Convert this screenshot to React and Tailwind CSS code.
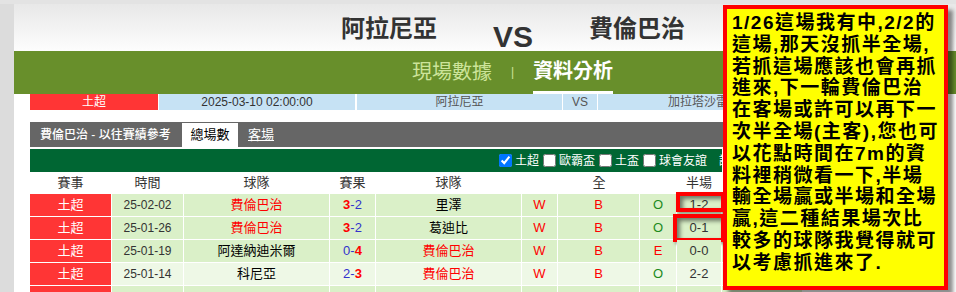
import React from 'react';

const rows = [
  { date: '25-02-02', home: '費倫巴治', away: '里澤', hs: '3', as: '2', homeIsUs: true, w: 'W', b: 'B', o: 'O', half: '1-2', bg: 'bg-[#daf0c8]', mark: 'a' },
  { date: '25-01-26', home: '費倫巴治', away: '葛迪比', hs: '3', as: '2', homeIsUs: true, w: 'W', b: 'B', o: 'O', half: '0-1', bg: 'bg-[#daf0c8]', mark: 'b' },
  { date: '25-01-19', home: '阿達納迪米爾', away: '費倫巴治', hs: '0', as: '4', homeIsUs: false, w: 'W', b: 'B', o: 'E', half: '0-0', bg: 'bg-[#daf0c8]' },
  { date: '25-01-14', home: '科尼亞', away: '費倫巴治', hs: '2', as: '3', homeIsUs: false, w: 'W', b: 'B', o: 'O', half: '2-2', bg: 'bg-[#eef8e6]' },
];

const cols = 'grid grid-cols-[81px_71px_145px_45px_145px_35px_81px_36px_44px_80px] gap-x-[1px]';

const Check = ({ label, checked }) => (
  <label className="flex items-center gap-[3px] mr-[4px] shrink-0">
    <input type="checkbox" defaultChecked={checked} className="w-[13px] h-[13px] m-0" />
    <span className="text-[12px] text-white">{label}</span>
  </label>
);

const App = () => {
  return (
    <div className="w-[956px] h-[292px] overflow-hidden relative bg-white font-['Liberation_Sans','Noto_Sans_CJK_TC',sans-serif]">
      <div className="h-[4px] bg-[#e3e3e3]" />
      <div className="flex h-[288px]">
        <div className="w-[14px] shrink-0 bg-[#dcdcdc]" />
        <div className="flex-1 flex flex-col">
          {/* match title */}
          <div className="h-[47px] bg-linear-to-b from-[#e8e8e8] to-[#fdfdfd] flex items-start pl-[327px] gap-[56px] text-[#333]">
            <span className="mt-[10px] text-[24px] leading-[30px] font-bold">阿拉尼亞</span>
            <span className="mt-[16px] text-[30px] leading-[34px] font-bold">VS</span>
            <span className="mt-[10px] text-[24px] leading-[30px] font-bold">費倫巴治</span>
          </div>

          {/* green nav */}
          <div className="h-[46px] bg-[#688f2b] flex items-end pl-[398px]">
            <div className="h-[43px] flex items-center text-[20px] text-[#cde49a] pb-[2px]">現場數據</div>
            <span className="h-[43px] flex items-center text-[12px] text-[#cde49a] mx-[19px] pb-[2px]">|</span>
            <div className="h-[43px] flex items-center text-[20px] font-bold text-white border-b-[3px] border-white">資料分析</div>
          </div>

          <div className="pl-[16px]">
            {/* match info */}
            <div className="flex h-[16px] text-[12px] leading-[16px] text-[#333]">
              <div className="w-[128px] bg-[#ff3535] text-white text-center">土超</div>
              <div className="w-[196px] ml-[1px] bg-[#c6e2f4] text-center">2025-03-10 02:00:00</div>
              <div className="w-[205px] ml-[2px] bg-[#c6e2f4] text-center text-[#555]">阿拉尼亞</div>
              <div className="w-[34px] ml-[1px] bg-[#c6e2f4] text-center text-[#555]">VS</div>
              <div className="w-[200px] ml-[1px] bg-[#c6e2f4] text-center text-[#555]">加拉塔沙雷</div>
            </div>

            {/* section tabs */}
            <div className="mt-[12px] h-[25px] bg-[#666666] flex items-end text-[12px] w-[790px]">
              <div className="h-[25px] flex items-center pl-[10px] text-white w-[152px] font-medium">費倫巴治 - 以往賽績參考</div>
              <div className="h-[24px] w-[56px] bg-white text-black text-[13px] flex items-center justify-center">總場數</div>
              <div className="h-[25px] flex items-center ml-[10px] text-white text-[13px] underline">客場</div>
            </div>

            {/* filters */}
            <div className="mt-[2px] h-[23px] bg-[#006633] flex items-center pl-[469px] w-[692px] overflow-hidden">
              <Check label="土超" checked />
              <Check label="歐霸盃" />
              <Check label="土盃" />
              <Check label="球會友誼" />
              <span className="ml-[8px] text-[12px] text-white shrink-0">讀</span>
            </div>

            {/* table */}
            <div className="flex flex-col gap-y-[1px]">
              <div className={`${cols} h-[21px] text-[13px] leading-[21px] text-[#333] text-center`}>
                <div>賽事</div>
                <div>時間</div>
                <div>球隊</div>
                <div>賽果</div>
                <div>球隊</div>
                <div className="col-span-3">全</div>
                <div>半場</div>
                <div></div>
              </div>
              {rows.map((r, i) => (
                <div key={i} className={`${cols} h-[22px] text-[12px] leading-[22px] text-center`}>
                  <div className="bg-[#ff3535] text-white text-[13px]">土超</div>
                  <div className={`${r.bg} text-[#333]`}>{r.date}</div>
                  <div className={`${r.bg} ${r.homeIsUs ? 'text-[#ff0000]' : 'text-black'} text-[13px]`}>{r.home}</div>
                  <div className={`${r.bg} text-[13px]`}>
                    {r.homeIsUs ? (
                      <>
                        <span className="text-[#ff0000] font-bold">{r.hs}</span>
                        <span className="text-[#3333cc]">-{r.as}</span>
                      </>
                    ) : (
                      <>
                        <span className="text-[#3333cc]">{r.hs}-</span>
                        <span className="text-[#ff0000] font-bold">{r.as}</span>
                      </>
                    )}
                  </div>
                  <div className={`${r.bg} ${r.homeIsUs ? 'text-black' : 'text-[#ff0000]'} text-[13px]`}>{r.away}</div>
                  <div className={`${r.bg} text-[#ff0000] text-[13px]`}>{r.w}</div>
                  <div className={`${r.bg} text-[#ff0000] text-[13px]`}>{r.b}</div>
                  <div className={`${r.bg} ${r.o === 'O' ? 'text-[#1d8a1d]' : 'text-[#ff0000]'} text-[13px]`}>{r.o}</div>
                  <div className={`${r.bg} text-[#333] text-[13px] relative`}>
                    {r.half}
                    {r.mark === 'a' && (
                      <div className="absolute left-[-1px] top-[-2px] w-[49px] h-[20px] border-[4px] border-[#ff0000] shadow-[inset_3px_3px_4px_rgba(0,0,0,0.5),2px_2px_3px_rgba(0,0,0,0.35)]" />
                    )}
                    {r.mark === 'b' && (
                      <div className="absolute left-[-4px] top-[-3px] w-[52px] h-[28px] border-[4px] border-[#ff0000] shadow-[inset_3px_3px_4px_rgba(0,0,0,0.5),2px_2px_3px_rgba(0,0,0,0.35)]" />
                    )}
                  </div>
                  <div className={r.bg}></div>
                </div>
              ))}
              <div className={`${cols} h-[22px]`}>
                <div className="bg-[#ff3535]" />
                <div className="bg-[#daf0c8]" />
                <div className="bg-[#daf0c8]" />
                <div className="bg-[#daf0c8]" />
                <div className="bg-[#daf0c8]" />
                <div className="bg-[#daf0c8]" />
                <div className="bg-[#daf0c8]" />
                <div className="bg-[#daf0c8]" />
                <div className="bg-[#daf0c8]" />
                <div className="bg-[#daf0c8]" />
              </div>
            </div>
          </div>
        </div>
      </div>

      {/* yellow note */}
      <div className="absolute left-[723px] top-[5px] w-[225px] h-[285px] border-[4px] border-[#ff0000] bg-[#ffff00] shadow-[5px_5px_4px_rgba(0,0,0,0.45)] pl-[5px] pt-[3px]">
        <p className="text-[19px] leading-[21.8px] tracking-[1.5px] font-bold text-black whitespace-nowrap">
          1/26這場我有中,2/2的<br />
          這場,那天沒抓半全場,<br />
          若抓這場應該也會再抓<br />
          進來,下一輪費倫巴治<br />
          在客場或許可以再下一<br />
          次半全場(主客),您也可<br />
          以花點時間在7m的資<br />
          料裡稍微看一下,半場<br />
          輸全場贏或半場和全場<br />
          贏,這二種結果場次比<br />
          較多的球隊我覺得就可<br />
          以考慮抓進來了.
        </p>
      </div>
    </div>
  );
};

export default App;
